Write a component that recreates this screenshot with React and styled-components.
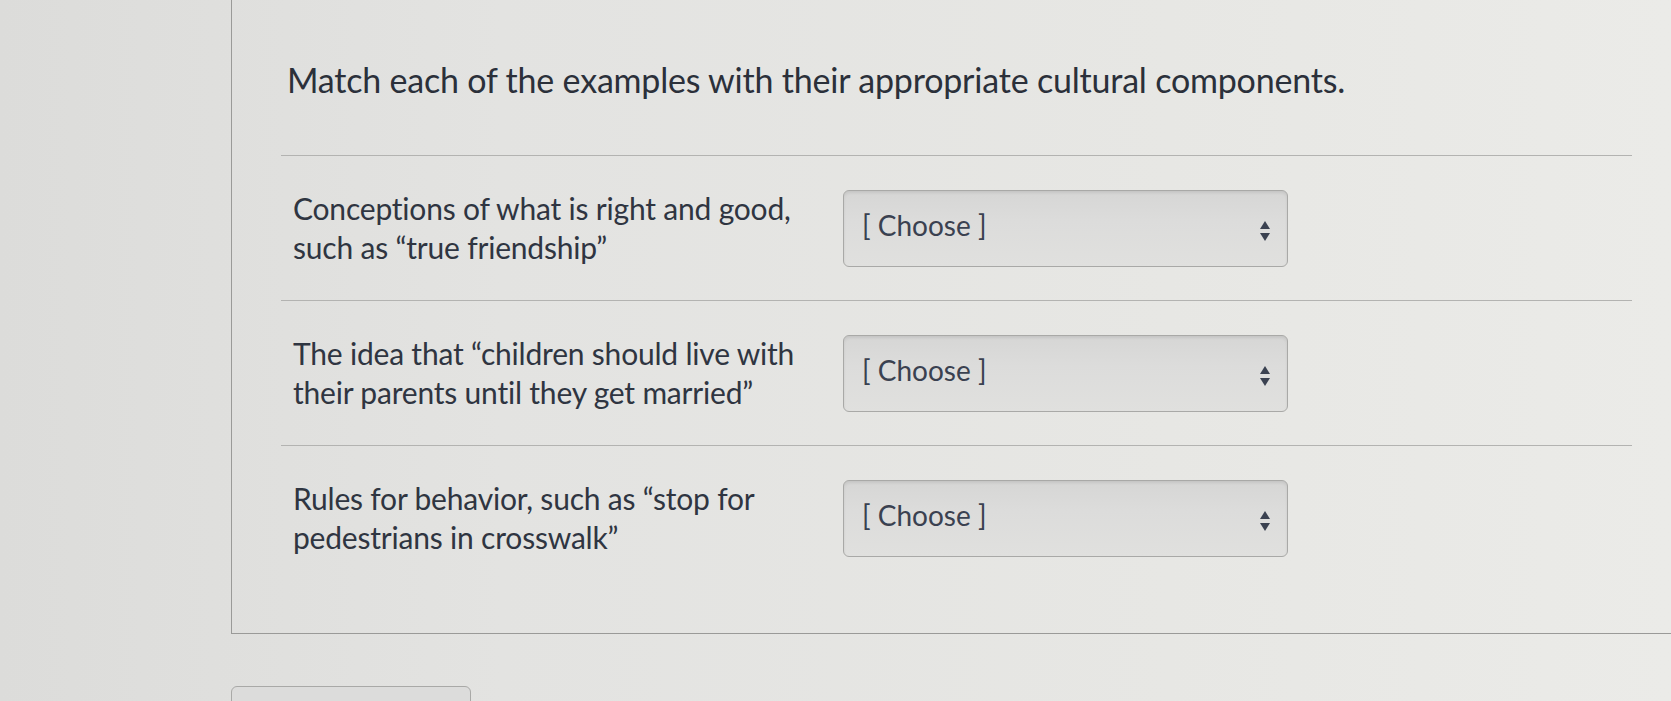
import styled, { createGlobalStyle } from "styled-components"

const GlobalStyle = createGlobalStyle`
  html, body {
    margin: 0;
    padding: 0;
    height: 100%;
    overflow: hidden;
  }
  body {
    background: linear-gradient(90deg, #dcdcda 0%, #e3e3e1 30%, #e7e7e4 70%, #ebebe8 100%);
    font-family: Lato, "Open Sans", sans-serif;
    color: #2f3541;
  }
`

const Page = styled.div`
  padding-left: 231px;
  display: flex;
  flex-direction: column;
`

const Panel = styled.div`
  margin-top: -2px;
  border: 1px solid #9a9a98;
  border-right: none;
  padding: 60px 0 43px 49px;
`

const Title = styled.h2`
  margin: 0 0 54px 6px;
  font-size: 34px;
  line-height: 42px;
  font-weight: 400;
  letter-spacing: -0.2px;
  color: #2b303a;
`

const Rows = styled.div`
  width: 1351px;
`

const Row = styled.div`
  display: flex;
  align-items: center;
  padding: 33px 0;
  border-top: 1px solid #b3b3b1;
`

const Prompt = styled.div`
  width: 520px;
  margin-left: 12px;
  margin-right: 30px;
  font-size: 30px;
  line-height: 39px;
  letter-spacing: -0.2px;
  color: #2f3541;
`

const Select = styled.div`
  box-sizing: border-box;
  width: 445px;
  height: 77px;
  display: flex;
  align-items: center;
  justify-content: space-between;
  padding: 0 16px 0 18px;
  border: 1px solid #a9a9a7;
  border-radius: 6px;
  background: linear-gradient(180deg, #d6d6d5 0%, #dcdcdb 40%, #e0e0de 100%);
  box-shadow: inset 0 2px 3px rgba(0, 0, 0, 0.08);
`

const Choose = styled.span`
  font-size: 28px;
  color: #3a4150;
  margin-top: -6px;
`

const Arrows = styled.svg`
  width: 12px;
  height: 22px;
  margin-top: 6px;
`

const Below = styled.div`
  margin-top: 52px;
  width: 238px;
  height: 60px;
  border: 1px solid #a9a9a7;
  border-radius: 6px;
  background: #dcdcdb;
`

const items = [
  "Conceptions of what is right and good, such as \u201ctrue friendship\u201d",
  "The idea that \u201cchildren should live with their parents until they get married\u201d",
  "Rules for behavior, such as \u201cstop for pedestrians in crosswalk\u201d",
]

const SelectArrows = () => (
  <Arrows viewBox="0 0 12 22">
    <path d="M6 1 L11 9 L1 9 Z" fill="#3a4150" />
    <path d="M6 21 L11 13 L1 13 Z" fill="#3a4150" />
  </Arrows>
)

export default function App() {
  return (
    <>
      <GlobalStyle />
      <Page>
        <Panel>
          <Title>Match each of the examples with their appropriate cultural components.</Title>
          <Rows>
            {items.map((text, i) => (
              <Row key={i}>
                <Prompt>{text}</Prompt>
                <Select>
                  <Choose>[ Choose ]</Choose>
                  <SelectArrows />
                </Select>
              </Row>
            ))}
          </Rows>
        </Panel>
        <Below />
      </Page>
    </>
  )
}
